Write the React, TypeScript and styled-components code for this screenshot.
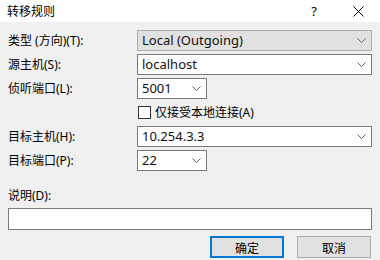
import styled, { createGlobalStyle } from 'styled-components';

const GlobalStyle = createGlobalStyle`
	html, body {
		margin: 0;
		padding: 0;
		background: #f0f0f0;
	}
	* {
		box-sizing: border-box;
	}
`;

const Dialog = styled.div`
	width: 380px;
	height: 260px;
	background: #f0f0f0;
	font-family: 'Noto Sans', 'Noto Sans CJK SC', sans-serif;
	font-size: 12px;
	color: #000;
	overflow: hidden;
`;

const TitleBar = styled.div`
	height: 22px;
	background: #ffffff;
	display: flex;
	align-items: center;
	padding-left: 7px;
`;

const Title = styled.span`
	flex: 1;
	font-family: 'Noto Sans CJK SC', sans-serif;
	font-size: 12px;
	line-height: 14px;
`;

const TitleButton = styled.div`
	width: 44px;
	height: 22px;
	display: flex;
	align-items: center;
	justify-content: center;
	font-size: 13px;
	color: #000;
`;

const Body = styled.div`
	padding: 8px 8px 0 8px;
`;

const Form = styled.div`
	display: grid;
	grid-template-columns: 129px 1fr;
	grid-auto-rows: 21px;
	row-gap: 3px;
	align-items: center;
`;

const Label = styled.label`
	font-family: 'Noto Sans', 'Noto Sans CJK SC', sans-serif;
	font-size: 12px;
	line-height: 14px;
	white-space: nowrap;
`;

const Field = styled.div<{ $width?: number; $readonly?: boolean }>`
	width: ${(p) => (p.$width ? `${p.$width}px` : '100%')};
	height: 21px;
	display: flex;
	align-items: center;
	padding: 0 4px;
	border: 1px solid ${(p) => (p.$readonly ? '#adadad' : '#7a7a7a')};
	background: ${(p) => (p.$readonly ? '#e1e1e1' : '#ffffff')};
	font-size: 13px;
	line-height: 15px;
`;

const FieldText = styled.span`
	flex: 1;
	white-space: nowrap;
	color: #111;
`;

const Arrow = styled.svg`
	width: 9px;
	height: 5px;
	margin-right: 1px;
`;

const CheckRow = styled.div`
	grid-column: 2;
	display: flex;
	align-items: center;
	gap: 4px;
	padding-left: 1px;
`;

const CheckBox = styled.span`
	width: 13px;
	height: 13px;
	border: 1px solid #333333;
	background: #ffffff;
`;

const NoteLabel = styled(Label)`
	display: block;
	margin-top: 18px;
`;

const NoteInput = styled.div`
	margin-top: 5px;
	height: 22px;
	border: 1px solid #7a7a7a;
	background: #ffffff;
`;

const Buttons = styled.div`
	display: flex;
	justify-content: flex-end;
	gap: 13px;
	margin-top: 6px;
	padding-right: 1px;
`;

const Button = styled.div<{ $primary?: boolean }>`
	width: 74px;
	height: 22px;
	display: flex;
	align-items: center;
	justify-content: center;
	background: #e1e1e1;
	border: ${(p) => (p.$primary ? '2px solid #0078d7' : '1px solid #adadad')};
	font-family: 'Noto Sans CJK SC', sans-serif;
	font-size: 12px;
`;

const Chevron = () => (
	<Arrow viewBox="0 0 9 5">
		<polyline points="0.5,0.5 4.5,4.5 8.5,0.5" fill="none" stroke="#606060" strokeWidth="1" />
	</Arrow>
);

const Combo = ({ value, width, readonly }: { value: string; width?: number; readonly?: boolean }) => (
	<Field $width={width} $readonly={readonly}>
		<FieldText>{value}</FieldText>
		<Chevron />
	</Field>
);

const App = () => (
	<>
		<GlobalStyle />
		<Dialog>
			<TitleBar>
				<Title>转移规则</Title>
				<TitleButton>?</TitleButton>
				<TitleButton>
					<svg width="11" height="11" viewBox="0 0 11 11">
						<path d="M0.5 0.5 L10.5 10.5 M10.5 0.5 L0.5 10.5" stroke="#000" strokeWidth="1" />
					</svg>
				</TitleButton>
			</TitleBar>
			<Body>
				<Form>
					<Label>类型 (方向)(T):</Label>
					<Combo value="Local (Outgoing)" readonly />
					<Label>源主机(S):</Label>
					<Combo value="localhost" />
					<Label>侦听端口(L):</Label>
					<Combo value="5001" width={70} />
					<CheckRow>
						<CheckBox />
						<Label>仅接受本地连接(A)</Label>
					</CheckRow>
					<Label>目标主机(H):</Label>
					<Combo value="10.254.3.3" />
					<Label>目标端口(P):</Label>
					<Combo value="22" width={70} />
				</Form>
				<NoteLabel>说明(D):</NoteLabel>
				<NoteInput />
				<Buttons>
					<Button $primary>确定</Button>
					<Button>取消</Button>
				</Buttons>
			</Body>
		</Dialog>
	</>
);

export default App;
